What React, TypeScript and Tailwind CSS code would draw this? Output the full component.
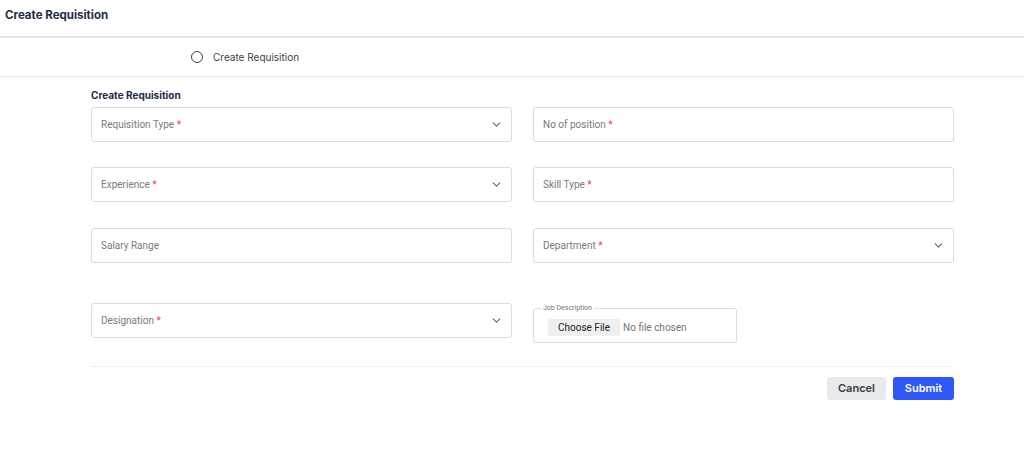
import React from "react";

const Chevron = () => (
  <svg width="13" height="13" viewBox="0 0 24 24" fill="none" stroke="#6b6b6b" strokeWidth="2.2" strokeLinecap="round" strokeLinejoin="round">
    <path d="M6 9l6 6 6-6" />
  </svg>
);

const Label = ({ text, req }: { text: string; req?: boolean }) => (
  <span className="text-[10px] text-[#7a7a7a]" style={{ fontFamily: "Roboto, sans-serif" }}>
    {text}
    {req && <span className="text-[#d84a4a]"> *</span>}
  </span>
);

const Field = ({ text, req, select }: { text: string; req?: boolean; select?: boolean }) => (
  <div className="h-[35px] border border-[#dcdcdc] rounded-[3px] flex items-center justify-between pl-[9px] pr-[8px] bg-white">
    <Label text={text} req={req} />
    {select && <Chevron />}
  </div>
);

export default function App() {
  return (
    <div className="w-[1024px] h-[465px] bg-white overflow-hidden" style={{ fontFamily: "Inter, sans-serif" }}>
      <div className="h-[38px] border-b-2 border-[#e4e4e4] flex items-center pl-[5px]">
        <h1 className="text-[11.5px] font-bold text-[#232c48] -mt-[4px]">Create Requisition</h1>
      </div>
      <div className="h-[39px] border-b border-[#e4e4e4] flex items-center pl-[191px]">
        <span className="w-[12px] h-[12px] rounded-full border-[1.5px] border-[#3a3f4c] inline-block" />
        <span className="ml-[10px] text-[10px] text-[#3b3f4a]">Create Requisition</span>
      </div>
      <div className="pl-[91px] pr-[70px]">
        <div className="pt-[11px] h-[30px] text-[10px] font-bold text-[#232c48]">Create Requisition</div>
        <div className="grid grid-cols-2 gap-x-[21px]">
          <Field text="Requisition Type" req select />
          <Field text="No of position" req />
        </div>
        <div className="grid grid-cols-2 gap-x-[21px] mt-[25px]">
          <Field text="Experience" req select />
          <Field text="Skill Type" req />
        </div>
        <div className="grid grid-cols-2 gap-x-[21px] mt-[26px]">
          <Field text="Salary Range" />
          <Field text="Department" req select />
        </div>
        <div className="grid grid-cols-2 gap-x-[21px] mt-[40px] items-start">
          <Field text="Designation" req select />
          <div className="pt-[5px]">
            <div className="relative w-[204px] h-[35px] border border-[#dcdcdc] rounded-[3px] pl-[14px] flex items-center" style={{ fontFamily: "Roboto, sans-serif" }}>
              <span className="absolute left-[7px] -top-[5px] bg-white px-[2px] text-[7px] leading-[8px] text-[#777]">Job Description</span>
              <span className="flex items-center mt-[3px]">
                <span className="bg-[#efefef] text-[10px] text-[#222] h-[17px] px-[10px] flex items-center">Choose File</span>
                <span className="ml-[3px] text-[10px] text-[#757575]">No file chosen</span>
              </span>
            </div>
          </div>
        </div>
        <div className="mt-[23px] border-t border-[#efefef] flex justify-end gap-[7px] pt-[10px]">
          <button className="w-[59px] h-[23px] rounded-[3px] bg-[#e8eaee] text-[11px] font-semibold text-[#333a44]">Cancel</button>
          <button className="w-[61px] h-[23px] rounded-[3px] bg-[#2f58f6] text-[11px] font-semibold text-white">Submit</button>
        </div>
      </div>
    </div>
  );
}
